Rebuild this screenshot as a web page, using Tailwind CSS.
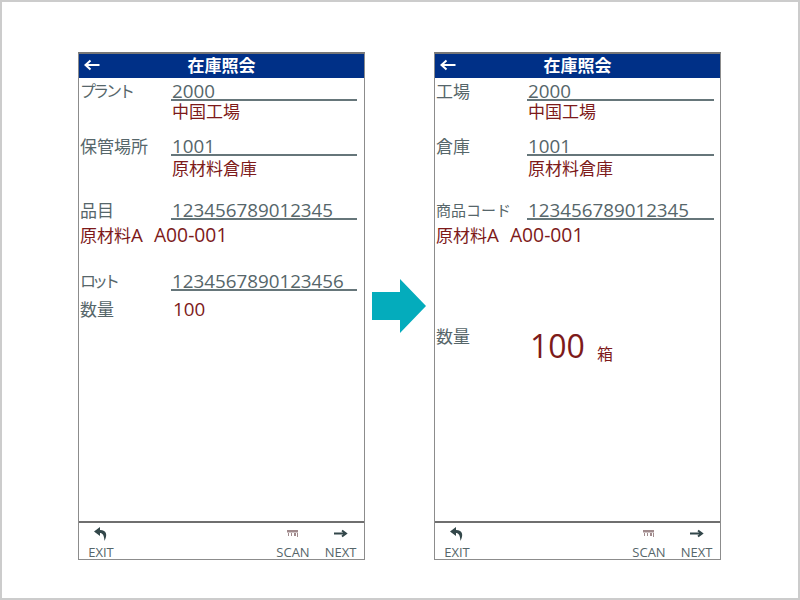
<!DOCTYPE html>
<html lang="ja">
  <head>
    <meta charset="UTF-8" />
    <title>在庫照会</title>
    <script src="https://cdn.jsdelivr.net/npm/@tailwindcss/browser@4"></script>
  </head>
  <body class="bg-white font-['Open_Sans','Noto_Sans_CJK_JP',sans-serif]">
    <div class="w-[800px] h-[600px] border-2 border-[#cccccc] bg-white flex items-start pl-[76px] pt-[50px]">
      <!-- before -->
      <div class="w-[287px] h-[508px] border border-[#8c8c8c] border-t-2 border-t-[#777777] flex flex-col">
        <div class="h-[24px] bg-[#003087] flex items-center relative">
          <svg class="absolute left-[4px] top-[5px]" width="18" height="12" viewBox="0 0 18 12"><path d="M16.500 6H3M7.500 1.500 2.500 6l5 4.500" fill="none" stroke="#fff" stroke-width="2"/></svg>
          <div class="w-full text-center text-white text-[17px] font-bold leading-none mb-[2px]">在庫照会</div>
        </div>
        <div class="flex-1 text-[17px] text-[#56666a]">
          <div class="grid grid-cols-[92px_186px] h-[20px] mt-[3px] items-end">
            <div class="pl-[1px] pt-[1px] h-[20px] leading-[19px] text-[16px] tracking-[-3px]">プラント</div>
            <div class="border-b-2 border-[#66767a] h-[20px] pl-[1px] pt-[2px] text-[18.8px] leading-[16px]">2000</div>
          </div>
          <div class="h-[22px] pl-[93px] text-[#7d1a1a] leading-[22px]">中国工場</div>
          <div class="grid grid-cols-[92px_186px] h-[20px] mt-[13px] items-end">
            <div class="pl-[1px] pt-[1px] h-[20px] leading-[19px]">保管場所</div>
            <div class="border-b-2 border-[#66767a] h-[20px] pl-[1px] pt-[2px] text-[18.8px] leading-[16px]">1001</div>
          </div>
          <div class="h-[26px] pl-[93px] text-[#7d1a1a] leading-[26px]">原材料倉庫</div>
          <div class="grid grid-cols-[92px_186px] h-[20px] mt-[18px] items-end">
            <div class="pl-[1px] pt-[1px] h-[20px] leading-[19px]">品目</div>
            <div class="border-b-2 border-[#66767a] h-[20px] pl-[1px] pt-[2px] text-[18.8px] leading-[16px]">123456789012345</div>
          </div>
          <div class="h-[32px] pl-[1px] text-[#7d1a1a] leading-[30px]">原材料<span class="text-[18.8px]">A</span><span class="ml-[11px] text-[19.3px]">A00-001</span></div>
          <div class="grid grid-cols-[92px_186px] h-[20px] mt-[19px] items-end">
            <div class="pl-[1px] pt-[1px] h-[20px] leading-[19px] text-[16px] tracking-[-4px]">ロット</div>
            <div class="border-b-2 border-[#66767a] h-[20px] pl-[1px] pt-[2px] text-[18.8px] leading-[16px]">1234567890123456</div>
          </div>
          <div class="grid grid-cols-[92px_186px] h-[38px] items-center">
            <div class="pl-[1px]">数量</div>
            <div class="pl-[2px] text-[18.8px] text-[#7d1a1a] mb-[2px]">100</div>
          </div>
        </div>
        <div class="h-[38px] border-t-2 border-[#6f6f6f] flex items-end text-[13px] leading-none text-[#56666a]">
          <div class="w-[48px] flex flex-col items-center gap-[5px] ml-[-2px]">
            <svg width="16" height="14" viewBox="0 0 16 14"><path d="M7 0 1 4.500 7 9V6c2.500 0 4 2 4.500 8C14.500 8 14 3.500 7 3z" fill="#33474a"/></svg>
            <span>EXIT</span>
          </div>
          <div class="ml-auto mr-[3px] w-[40px] flex flex-col items-center gap-[5px]">
            <svg width="16" height="14" viewBox="0 0 16 14"><path d="M2 3h11v2.500H2zM3 6h1v3H3zM6 6h1v3H6zM9 6h2v3H9zM12 6h1v4h-1z" fill="#a08a8c"/></svg>
            <span>SCAN</span>
          </div>
          <div class="w-[49px] flex flex-col items-center gap-[5px] mr-[-1px]">
            <svg width="16" height="14" viewBox="0 0 16 14"><path d="M1 6.500h11M9 3.500l4 3-4 3" fill="none" stroke="#33474a" stroke-width="2"/></svg>
            <span>NEXT</span>
          </div>
        </div>
      </div>

      <svg class="ml-[7px] mr-[8px] mt-[227px] shrink-0" width="54" height="54" viewBox="0 0 54 54"><path d="M0 13H28V0L54 27 28 54V41H0z" fill="#04acbc"/></svg>

      <!-- after -->
      <div class="w-[287px] h-[508px] border border-[#8c8c8c] border-t-2 border-t-[#777777] flex flex-col">
        <div class="h-[24px] bg-[#003087] flex items-center relative">
          <svg class="absolute left-[4px] top-[5px]" width="18" height="12" viewBox="0 0 18 12"><path d="M16.500 6H3M7.500 1.500 2.500 6l5 4.500" fill="none" stroke="#fff" stroke-width="2"/></svg>
          <div class="w-full text-center text-white text-[17px] font-bold leading-none mb-[2px]">在庫照会</div>
        </div>
        <div class="flex-1 text-[17px] text-[#56666a]">
          <div class="grid grid-cols-[92px_187px] h-[20px] mt-[3px] items-end">
            <div class="pl-[1px] pt-[1px] h-[20px] leading-[19px]">工場</div>
            <div class="border-b-2 border-[#66767a] h-[20px] pl-[1px] pt-[2px] text-[18.8px] leading-[16px]">2000</div>
          </div>
          <div class="h-[22px] pl-[93px] text-[#7d1a1a] leading-[22px]">中国工場</div>
          <div class="grid grid-cols-[92px_187px] h-[20px] mt-[13px] items-end">
            <div class="pl-[1px] pt-[1px] h-[20px] leading-[19px]">倉庫</div>
            <div class="border-b-2 border-[#66767a] h-[20px] pl-[1px] pt-[2px] text-[18.8px] leading-[16px]">1001</div>
          </div>
          <div class="h-[26px] pl-[93px] text-[#7d1a1a] leading-[26px]">原材料倉庫</div>
          <div class="grid grid-cols-[92px_187px] h-[20px] mt-[18px] items-end">
            <div class="pl-[1px] pt-[1px] h-[20px] leading-[19px] text-[15px]">商品コード</div>
            <div class="border-b-2 border-[#66767a] h-[20px] pl-[1px] pt-[2px] text-[18.8px] leading-[16px]">123456789012345</div>
          </div>
          <div class="h-[32px] pl-[1px] text-[#7d1a1a] leading-[30px]">原材料<span class="text-[18.8px]">A</span><span class="ml-[11px] text-[19.3px]">A00-001</span></div>
          <div class="grid grid-cols-[92px_187px] h-[50px] mt-[75px] items-start">
            <div class="pl-[1px] leading-[20px]">数量</div>
            <div class="pl-[3px] flex items-end text-[#7d1a1a] leading-none mt-[-3px]">
              <span class="text-[32px] leading-[44px]">100</span>
              <span class="text-[16px] ml-[12px] mb-[6px]">箱</span>
            </div>
          </div>
        </div>
        <div class="h-[38px] border-t-2 border-[#6f6f6f] flex items-end text-[13px] leading-none text-[#56666a]">
          <div class="w-[48px] flex flex-col items-center gap-[5px] ml-[-2px]">
            <svg width="16" height="14" viewBox="0 0 16 14"><path d="M7 0 1 4.500 7 9V6c2.500 0 4 2 4.500 8C14.500 8 14 3.500 7 3z" fill="#33474a"/></svg>
            <span>EXIT</span>
          </div>
          <div class="ml-auto mr-[3px] w-[40px] flex flex-col items-center gap-[5px]">
            <svg width="16" height="14" viewBox="0 0 16 14"><path d="M2 3h11v2.500H2zM3 6h1v3H3zM6 6h1v3H6zM9 6h2v3H9zM12 6h1v4h-1z" fill="#a08a8c"/></svg>
            <span>SCAN</span>
          </div>
          <div class="w-[49px] flex flex-col items-center gap-[5px] mr-[-1px]">
            <svg width="16" height="14" viewBox="0 0 16 14"><path d="M1 6.500h11M9 3.500l4 3-4 3" fill="none" stroke="#33474a" stroke-width="2"/></svg>
            <span>NEXT</span>
          </div>
        </div>
      </div>
    </div>
  </body>
</html>
